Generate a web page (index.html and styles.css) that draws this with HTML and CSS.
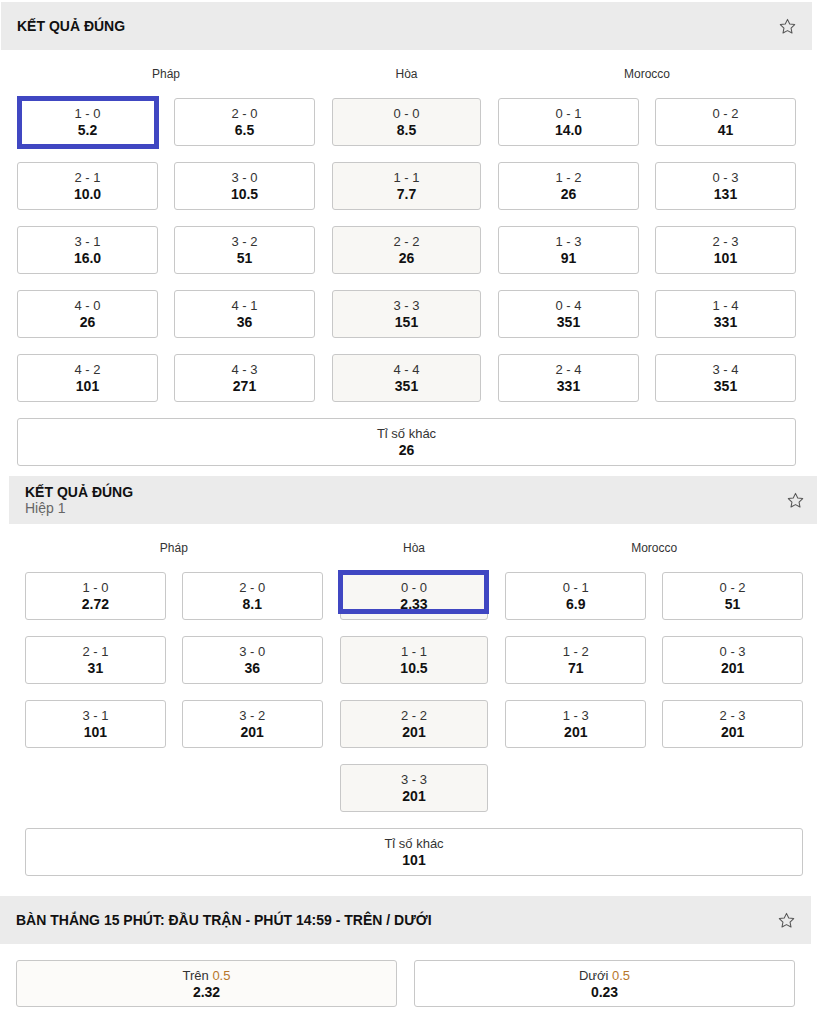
FILE: index.html
```html
<!DOCTYPE html>
<html lang="vi">

<head>
    <meta charset="UTF-8">
    <meta name="viewport" content="width=device-width, initial-scale=1.0">
    <title>Kết quả đúng</title>
    <link rel="stylesheet" href="styles.css">
</head>

<body>
    <!-- Kết quả đúng: cả trận -->
    <section class="market market-a">
        <div class="market-head">
            <div class="market-title">
                <div class="title">KẾT QUẢ ĐÚNG</div>
            </div>
            <svg class="star" viewBox="0 0 24 24"><path d="M12 3l2.8 5.8 6.3.8-4.6 4.4 1.2 6.3L12 17.2l-5.7 3.1 1.2-6.3L2.9 9.6l6.3-.8z"/></svg>
        </div>
        <div class="market-body">
            <div class="groups">
                <div class="group group-team">
                    <div class="group-label">Pháp</div>
                    <div class="cells">
                        <div class="cell sel sel-a"><span class="score">1 - 0</span><span class="odds">5.2</span></div>
                        <div class="cell"><span class="score">2 - 0</span><span class="odds">6.5</span></div>
                        <div class="cell"><span class="score">2 - 1</span><span class="odds">10.0</span></div>
                        <div class="cell"><span class="score">3 - 0</span><span class="odds">10.5</span></div>
                        <div class="cell"><span class="score">3 - 1</span><span class="odds">16.0</span></div>
                        <div class="cell"><span class="score">3 - 2</span><span class="odds">51</span></div>
                        <div class="cell"><span class="score">4 - 0</span><span class="odds">26</span></div>
                        <div class="cell"><span class="score">4 - 1</span><span class="odds">36</span></div>
                        <div class="cell"><span class="score">4 - 2</span><span class="odds">101</span></div>
                        <div class="cell"><span class="score">4 - 3</span><span class="odds">271</span></div>
                    </div>
                </div>
                <div class="group group-draw">
                    <div class="group-label">Hòa</div>
                    <div class="cells">
                        <div class="cell"><span class="score">0 - 0</span><span class="odds">8.5</span></div>
                        <div class="cell"><span class="score">1 - 1</span><span class="odds">7.7</span></div>
                        <div class="cell"><span class="score">2 - 2</span><span class="odds">26</span></div>
                        <div class="cell"><span class="score">3 - 3</span><span class="odds">151</span></div>
                        <div class="cell"><span class="score">4 - 4</span><span class="odds">351</span></div>
                    </div>
                </div>
                <div class="group group-team">
                    <div class="group-label">Morocco</div>
                    <div class="cells">
                        <div class="cell"><span class="score">0 - 1</span><span class="odds">14.0</span></div>
                        <div class="cell"><span class="score">0 - 2</span><span class="odds">41</span></div>
                        <div class="cell"><span class="score">1 - 2</span><span class="odds">26</span></div>
                        <div class="cell"><span class="score">0 - 3</span><span class="odds">131</span></div>
                        <div class="cell"><span class="score">1 - 3</span><span class="odds">91</span></div>
                        <div class="cell"><span class="score">2 - 3</span><span class="odds">101</span></div>
                        <div class="cell"><span class="score">0 - 4</span><span class="odds">351</span></div>
                        <div class="cell"><span class="score">1 - 4</span><span class="odds">331</span></div>
                        <div class="cell"><span class="score">2 - 4</span><span class="odds">331</span></div>
                        <div class="cell"><span class="score">3 - 4</span><span class="odds">351</span></div>
                    </div>
                </div>
            </div>
            <div class="cell cell-wide"><span class="score">Tỉ số khác</span><span class="odds">26</span></div>
        </div>
    </section>

    <!-- Kết quả đúng: hiệp 1 -->
    <section class="market market-b">
        <div class="market-head">
            <div class="market-title">
                <div class="title">KẾT QUẢ ĐÚNG</div>
                <div class="subtitle">Hiệp 1</div>
            </div>
            <svg class="star" viewBox="0 0 24 24"><path d="M12 3l2.8 5.8 6.3.8-4.6 4.4 1.2 6.3L12 17.2l-5.7 3.1 1.2-6.3L2.9 9.6l6.3-.8z"/></svg>
        </div>
        <div class="market-body">
            <div class="groups">
                <div class="group group-team">
                    <div class="group-label">Pháp</div>
                    <div class="cells">
                        <div class="cell"><span class="score">1 - 0</span><span class="odds">2.72</span></div>
                        <div class="cell"><span class="score">2 - 0</span><span class="odds">8.1</span></div>
                        <div class="cell"><span class="score">2 - 1</span><span class="odds">31</span></div>
                        <div class="cell"><span class="score">3 - 0</span><span class="odds">36</span></div>
                        <div class="cell"><span class="score">3 - 1</span><span class="odds">101</span></div>
                        <div class="cell"><span class="score">3 - 2</span><span class="odds">201</span></div>
                    </div>
                </div>
                <div class="group group-draw">
                    <div class="group-label">Hòa</div>
                    <div class="cells">
                        <div class="cell sel sel-b"><span class="score">0 - 0</span><span class="odds">2.33</span></div>
                        <div class="cell"><span class="score">1 - 1</span><span class="odds">10.5</span></div>
                        <div class="cell"><span class="score">2 - 2</span><span class="odds">201</span></div>
                        <div class="cell"><span class="score">3 - 3</span><span class="odds">201</span></div>
                    </div>
                </div>
                <div class="group group-team">
                    <div class="group-label">Morocco</div>
                    <div class="cells">
                        <div class="cell"><span class="score">0 - 1</span><span class="odds">6.9</span></div>
                        <div class="cell"><span class="score">0 - 2</span><span class="odds">51</span></div>
                        <div class="cell"><span class="score">1 - 2</span><span class="odds">71</span></div>
                        <div class="cell"><span class="score">0 - 3</span><span class="odds">201</span></div>
                        <div class="cell"><span class="score">1 - 3</span><span class="odds">201</span></div>
                        <div class="cell"><span class="score">2 - 3</span><span class="odds">201</span></div>
                    </div>
                </div>
            </div>
            <div class="cell cell-wide"><span class="score">Tỉ số khác</span><span class="odds">101</span></div>
        </div>
    </section>

    <!-- Bàn thắng 15 phút -->
    <section class="market market-c">
        <div class="market-head">
            <div class="market-title">
                <div class="title">BÀN THẮNG 15 PHÚT: ĐẦU TRẬN - PHÚT 14:59 - TRÊN / DƯỚI</div>
            </div>
            <svg class="star" viewBox="0 0 24 24"><path d="M12 3l2.8 5.8 6.3.8-4.6 4.4 1.2 6.3L12 17.2l-5.7 3.1 1.2-6.3L2.9 9.6l6.3-.8z"/></svg>
        </div>
        <div class="market-body">
            <div class="pair">
                <div class="cell cell-soft"><span class="score">Trên <em class="line">0.5</em></span><span class="odds">2.32</span></div>
                <div class="cell"><span class="score">Dưới <em class="line">0.5</em></span><span class="odds">0.23</span></div>
            </div>
        </div>
    </section>
</body>

</html>
```

FILE: styles.css
```css
body {
    font-family: "Liberation Sans", Arial, sans-serif;
    margin: 0;
    padding-top: 2px;
    background-color: #fff;
    color: #222;
}

.market {
    box-sizing: border-box;
}

.market-a {
    width: 811px;
    margin-left: 1px;
}

.market-b {
    width: 808px;
    margin-left: 9px;
}

.market-c {
    width: 811px;
    margin-left: 0;
}

.market-head {
    display: flex;
    align-items: center;
    justify-content: space-between;
    min-height: 48px;
    box-sizing: border-box;
    padding: 8px 15px 8px 16px;
    background: #ebebeb;
}

.market-b .market-head {
    padding-right: 12px;
}

.title {
    font-size: 14px;
    font-weight: bold;
    line-height: 16px;
    color: #111;
}

.subtitle {
    font-size: 14px;
    line-height: 16px;
    color: #666;
}

.star {
    width: 19px;
    height: 19px;
    fill: none;
    stroke: #555;
    stroke-width: 1.3;
    stroke-linejoin: round;
}

.market-body {
    padding: 16px 16px 10px;
    display: flex;
    flex-direction: column;
    gap: 16px;
}

.market-b .market-body {
    padding: 16px 14px 20px 16px;
}

.market-c .market-body {
    padding: 16px;
}

.groups {
    display: flex;
    gap: 17px;
    align-items: flex-start;
}

.group-team {
    flex: 2;
}

.group-draw {
    flex: 1;
}

.group-label {
    text-align: center;
    font-size: 12px;
    line-height: 16px;
    color: #333;
    margin-bottom: 16px;
}

.cells {
    display: grid;
    grid-template-columns: repeat(2, 1fr);
    gap: 16px;
}

.group-draw .cells {
    grid-template-columns: 1fr;
}

.cell {
    position: relative;
    height: 48px;
    box-sizing: border-box;
    display: flex;
    flex-direction: column;
    align-items: center;
    justify-content: center;
    border: 1px solid #c8c8c8;
    border-radius: 3px;
    background: #fff;
}

.group-draw .cell {
    background: #f8f7f4;
}

.cell-soft {
    background: #fcfbf9;
}

.score {
    font-size: 13px;
    line-height: 16px;
    color: #333;
}

.odds {
    font-size: 14px;
    line-height: 16px;
    font-weight: bold;
    color: #111;
}

.line {
    font-style: normal;
    color: #b7772c;
}

.pair {
    display: grid;
    grid-template-columns: 1fr 1fr;
    gap: 17px;
}

.pair .cell {
    height: 47px;
}

/* khung chọn màu xanh */
.sel::after {
    content: "";
    position: absolute;
    border: 5px solid #4047c2;
}

.sel-a::after {
    top: -3px;
    bottom: -4px;
    left: -1px;
    right: -2px;
}

.sel-b::after {
    top: -3px;
    bottom: 5px;
    left: -3px;
    right: -2px;
}
```
